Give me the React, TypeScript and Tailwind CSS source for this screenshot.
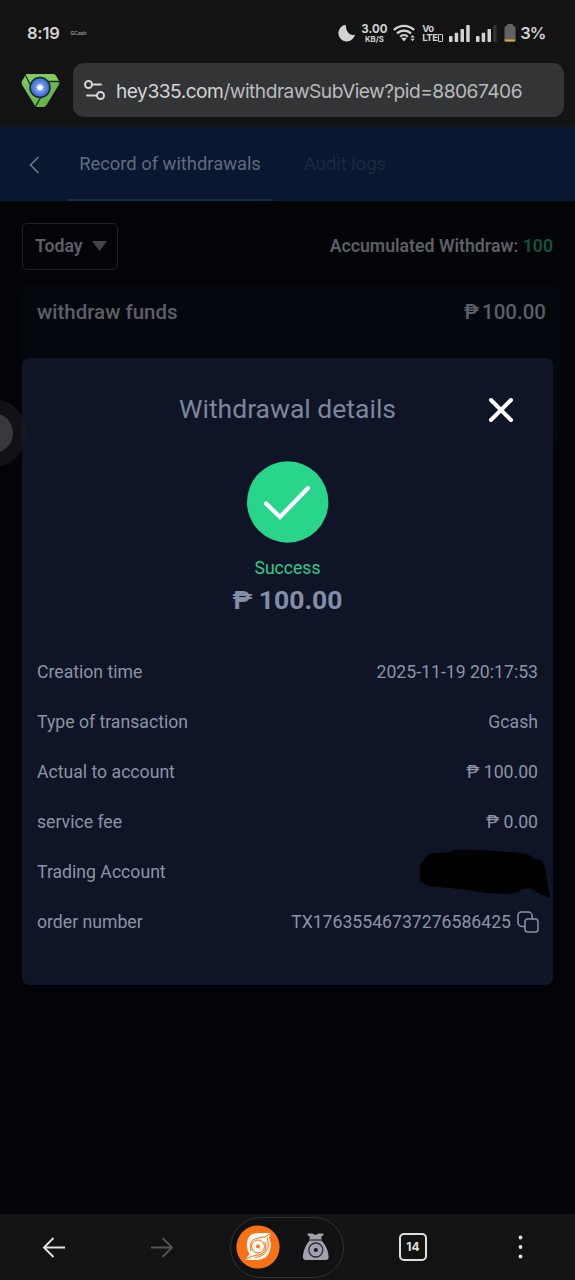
import type { ReactNode } from "react";

function StatusBar() {
  return (
    <div className="flex h-[66px] items-center justify-between pl-[27px] pr-[31px] text-[#d2d2d2]">
      <div className="flex items-center gap-[11px]">
        <span className="font-[Inter] text-[16.5px] leading-5 font-semibold tracking-[-0.2px]">8:19</span>
        <span className="font-[Inter] text-[5px] leading-5 font-medium text-[#a8a8a8]">GCash</span>
      </div>
      <div className="flex items-center">
        <svg className="mr-[6px] h-[18px] w-[17px]" viewBox="0 0 17 18" fill="currentColor">
          <path d="M8 .7A8.400 8.400 0 1 0 17 10.500Q13.500 12 10.500 9 7.300 5.500 8 .7Z" />
        </svg>
        <div className="mr-[6px] flex w-[26px] flex-col items-center font-[Inter] font-bold">
          <span className="text-[11.500px] leading-[11px]">3.00</span>
          <span className="text-[7.800px] leading-[8px]">KB/S</span>
        </div>
        <svg className="mr-[7px] h-[18px] w-[22px]" viewBox="0 0 22 18" fill="none" stroke="currentColor" strokeWidth="2.200">
          <path d="M.8 6a14.500 14.500 0 0 1 20.400 0" />
          <path d="M4 9.500a10 10 0 0 1 14 0" />
          <path d="M7.200 12.700a5.500 5.500 0 0 1 7.600 0" />
          <path d="M8 13.800h6L11 17.500z" fill="currentColor" stroke="none" />
          <path d="M17.500 13.500 19.600 11l2.100 2.500zM17.500 14.800l2.100 2.500 2.100-2.500z" fill="currentColor" stroke="none" />
        </svg>
        <div className="mr-[6px] flex w-[21px] flex-col font-[Inter] text-[9.500px] font-bold tracking-[-0.500px]">
          <span className="leading-[9.500px]">Vo</span>
          <span className="flex items-center leading-[9.500px]">
            LTE
            <span className="ml-[0.500px] h-[8px] w-[5px] shrink-0 rounded-[1px] border-[1.500px] border-current" />
          </span>
        </div>
        <svg className="mr-[6px] h-[17px] w-[21px]" viewBox="0 0 21 17" fill="currentColor">
          <rect x="0" y="11" width="3.500" height="6" rx=".8" />
          <rect x="5.700" y="7.800" width="3.500" height="9.200" rx=".8" />
          <rect x="11.500" y="4" width="3.500" height="13" rx=".8" />
          <rect x="17.200" y="0" width="3.500" height="17" rx=".8" />
        </svg>
        <svg className="mr-[7px] h-[17px] w-[21px]" viewBox="0 0 21 17" fill="currentColor">
          <rect x="0" y="11" width="3.500" height="6" rx=".8" />
          <rect x="5.700" y="7.800" width="3.500" height="9.200" rx=".8" />
          <rect x="11.500" y="4" width="3.500" height="13" rx=".8" />
          <rect x="17.200" y="0" width="3.500" height="17" rx=".8" fill="#343434" />
        </svg>
        <svg className="mr-[4px] h-[18px] w-[12px]" viewBox="0 0 12 18">
          <path d="M3 2V1q0-1 1-1h4q1 0 1 1v1h1q1.500 0 1.500 1.500V16q0 1.500-1.500 1.500H2Q.5 17.500.5 16V3.500Q.5 2 2 2Z" fill="#626262" />
          <path d="M.5 15.500h11V16q0 1.500-1.500 1.500H2Q.5 17.500.5 16Z" fill="#dda33e" />
        </svg>
        <span className="-mr-px font-[Inter] text-[16.500px] leading-5 font-semibold tracking-[-1.200px]">3%</span>
      </div>
    </div>
  );
}

function AddressBar() {
  return (
    <div className="-mt-[3px] flex h-[54px] items-center pl-[21px] pr-[11px]">
      <svg className="h-[35px] w-[39px] shrink-0" viewBox="0 0 39 35">
        <defs>
          <linearGradient id="leaf" x1="0" y1="0" x2="1" y2="1">
            <stop offset="0" stopColor="#85c865" />
            <stop offset="1" stopColor="#5cae43" />
          </linearGradient>
          <radialGradient id="core">
            <stop offset="0" stopColor="#a8c5ff" />
            <stop offset=".6" stopColor="#5b83e0" />
            <stop offset="1" stopColor="#3b65cb" />
          </radialGradient>
        </defs>
        <path d="M6 1h26q2 0 3 2l3 5q.8 2-.3 4L25.500 32q-1 2-3 2h-6q-2 0-3-2L1.200 12q-1-2-.2-4l3-5Q5 1 6 1Z" fill="url(#leaf)" />
        <path d="M6 1h26q2 0 3 2l3 5H19Q10 8 8.500 13L4.500 3Z" fill="#82c960" />
        <path d="M4.500 2.500 10 13M38 8.500H20M14.500 33.500 20 24" stroke="#182b18" strokeWidth="1.300" fill="none" />
        <circle cx="19" cy="14.500" r="10" fill="url(#core)" stroke="#17253c" strokeWidth="1.500" />
        <path d="m19 10.500.9 1.900 2-.8-.8 2 1.900.9-1.900.9.8 2-2-.8-.9 1.900-.9-1.900-2 .8.8-2-1.900-.9 1.900-.9-.8-2 2 .8Z" fill="#f6faff" />
      </svg>
      <div className="ml-[13px] flex h-[54px] w-[491px] items-center rounded-[11px] bg-[#333436] pl-[11px]">
        <svg className="h-[21px] w-[22px] shrink-0" viewBox="0 0 22 21" fill="none" stroke="#d5d6d8" strokeWidth="2" strokeLinecap="round">
          <circle cx="4.500" cy="4.500" r="3.500" />
          <path d="M8.300 4.500H17" />
          <circle cx="16.500" cy="15.500" r="3.500" />
          <path d="M3 15.500h10" />
        </svg>
        <span className="ml-[10px] pt-[2px] whitespace-nowrap font-[Inter] text-[19.200px] leading-7 tracking-[-0.520px] text-[#d4d5d7]">
          hey335.com<span className="text-[#b9babc]">/withdrawSubView?pid=88067406</span>
        </span>
      </div>
    </div>
  );
}

function TabHeader() {
  return (
    <nav className="flex h-[74px] items-stretch bg-[#0a1731] text-[18.350px] leading-6">
      <button className="flex w-[67px] items-center pt-[2px] pl-[28px]" aria-label="Back">
        <svg className="h-[18px] w-[12px]" viewBox="0 0 12 18" fill="none" stroke="#747c89" strokeWidth="1.500">
          <path d="M10.500 1 2.500 9l8 8" />
        </svg>
      </button>
      <div className="flex w-[206px] items-center justify-center border-b-2 border-[#0c3345] pt-[2px] text-[#616b7c]">Record of withdrawals</div>
      <div className="ml-[31px] flex items-center border-b-2 border-transparent pt-[2px] text-[#1d2a40]">Audit logs</div>
    </nav>
  );
}

function DetailRow({ label, children }: { label: string; children?: ReactNode }) {
  return (
    <div className="flex h-[50px] items-center justify-between">
      <span>{label}</span>
      <span className="flex items-center">{children}</span>
    </div>
  );
}

function WithdrawalDialog() {
  return (
    <section className="absolute top-[358px] left-[22px] flex h-[627px] w-[531px] flex-col rounded-[7px] bg-[#0f1526] px-[15px] text-[#8c93a6]">
      <header className="flex h-[102px] items-center">
        <span className="w-[64px]" />
        <h1 className="flex-1 text-center text-[26.500px] leading-8 text-[#7d869f]">Withdrawal details</h1>
        <button className="flex w-[64px] justify-start pt-[2px]" aria-label="Close">
          <svg className="ml-[14px] h-[26px] w-[26px]" viewBox="0 0 26 26" stroke="#fff" strokeWidth="4" strokeLinecap="round">
            <path d="m3 3 20 20M23 3 3 23" />
          </svg>
        </button>
      </header>
      <div className="flex flex-col items-center">
        <svg className="mt-[0.500px] h-[82px] w-[82px]" viewBox="0 0 82 82">
          <circle cx="40.700" cy="41" r="40.700" fill="#29d48b" />
          <path d="m19 42.500 14 13.500 28-29" fill="none" stroke="#fff" strokeWidth="4.300" strokeLinecap="round" />
        </svg>
        <span className="mt-[13px] text-[17.600px] leading-6 text-[#2dcb8c]">Success</span>
        <strong className="mt-[2px] text-[26.500px] leading-9 font-bold text-[#858ea8]">₱ 100.00</strong>
      </div>
      <div className="mt-[29.500px] text-[17.650px] leading-6">
        <DetailRow label="Creation time">2025-11-19 20:17:53</DetailRow>
        <DetailRow label="Type of transaction">Gcash</DetailRow>
        <DetailRow label="Actual to account">₱ 100.00</DetailRow>
        <DetailRow label="service fee">₱ 0.00</DetailRow>
        <DetailRow label="Trading Account">
          <svg className="-mr-[14px] h-[50px] w-[134px]" viewBox="0 0 134 50">
            <path d="M10 9q4-3 11-2l10-1 6-2q35-1 72 4l8 5 6 1 3 7 2 12 3 16-9-3-10-6-8 1-6 4-8 1-22-1-18-3-18-2-21-2-8-4V18Z" fill="#000" stroke="#000" strokeWidth="2" strokeLinejoin="round" />
          </svg>
        </DetailRow>
        <DetailRow label="order number">
          TX17635546737276586425
          <svg className="-mr-[1px] ml-[6px] h-[22px] w-[22px]" viewBox="0 0 22 22" fill="none" stroke="#8c93a6" strokeWidth="1.500">
            <path d="M8 15.500H5.500Q1 15 1 11.500V4.300A3.300 3.300 0 0 1 4.300 1h6.900a4 4 0 0 1 4 4V8" />
            <rect x="8" y="8" width="13" height="13" rx="2.800" />
          </svg>
        </DetailRow>
      </div>
    </section>
  );
}

function WithdrawalRecords() {
  return (
    <main className="flex-1 bg-[#030408] px-[22px] pt-[22px] text-[#5d5f66]">
      <div className="flex h-[47px] items-center justify-between text-[17.700px] leading-6 font-semibold">
        <button className="flex h-[47px] w-[96px] items-center justify-between rounded-[5px] border border-[#202126] pr-[10px] pb-[2px] pl-[12px]">
          Today
          <svg className="h-[10px] w-[15px]" viewBox="0 0 15 10" fill="#43444a">
            <path d="M0 0h15L7.500 10z" />
          </svg>
        </button>
        <span className="pb-[2px]">
          Accumulated Withdraw: <span className="text-[#125238]">100</span>
        </span>
      </div>
      <div className="-mr-[7px] mt-[17px] flex h-[153px] items-start justify-between rounded-[5px] bg-[#05070e] pt-[13px] pr-[14px] pl-[15px] text-[20.500px] leading-6 font-medium">
        <span>withdraw funds</span>
        <span className="flex gap-[3px]"><span>₱</span><span>100.00</span></span>
      </div>
    </main>
  );
}

function BrowserToolbar() {
  return (
    <footer className="flex h-[66px] items-center bg-[#131313]">
      <svg className="ml-[42px] h-[22px] w-[24px]" viewBox="0 0 24 22" fill="none" stroke="#e1e1e1" strokeWidth="2">
        <path d="M23 11.500H2.500M11.500 2 2 11.500l9.500 9.500" />
      </svg>
      <svg className="ml-[84px] h-[22px] w-[24px]" viewBox="0 0 24 22" fill="none" stroke="#555" strokeWidth="1.800">
        <path d="M1 11.500h20.500M12.500 2 22 11.500l-9.500 9.500" />
      </svg>
      <div className="ml-[56px] flex h-[61px] w-[114px] items-center rounded-full border border-[#303234] bg-[#101112] pl-[5px]">
        <svg className="h-[44px] w-[44px]" viewBox="0 0 44 44">
          <circle cx="22" cy="22" r="21.600" fill="#fa7016" />
          <path d="M35 8H22Q14 8 11.500 15q-2 8 2 14L9 35h13q10-1 12-10 2-7-1-12Z" fill="#fffaf3" />
          <g fill="none" stroke="#fa7016" strokeWidth="1">
            <circle cx="22" cy="21.500" r="6.500" />
            <path d="M35 8.500Q29 13 22 13c-7 1-9 7-7 13M9 34.500q7-4 13-4.500c8-1 9-8 7-13M31 12.500q3 9-1 14-3 5-11 6" />
          </g>
          <circle cx="22" cy="21.500" r="2" fill="#fa7016" />
        </svg>
        <svg className="ml-[22px] h-[30px] w-[28px]" viewBox="0 0 28 30">
          <path d="M7 7.500 8 5 5.500 3V1.500h5l3 1.500 3-1.500h5V3L19 5l1 2.500Z" fill="#a0a3ae" />
          <path d="M7.500 8.500h12q6 6.500 7 14.500 1 5-3 5H4q-4 0-3-5 1-8 6.500-14.500Z" fill="#a0a3ae" />
          <circle cx="13.800" cy="18" r="7" fill="none" stroke="#2a2d35" strokeWidth="1.300" />
          <circle cx="13.800" cy="18" r="2.100" fill="#15171b" />
        </svg>
      </div>
      <div className="ml-[55px] flex h-[28px] w-[28px] items-center justify-center rounded-[5px] border-2 border-[#e0e0e0] font-[Inter] text-[12px] font-bold text-[#e0e0e0]">14</div>
      <svg className="ml-[91px] h-[24px] w-[5px]" viewBox="0 0 5 24" fill="#e0e0e0">
        <circle cx="2.500" cy="2.500" r="1.900" />
        <circle cx="2.500" cy="12" r="1.900" />
        <circle cx="2.500" cy="21.500" r="1.900" />
      </svg>
    </footer>
  );
}

export default function App() {
  return (
    <div className="relative flex h-[1280px] w-[575px] flex-col overflow-hidden bg-[#030408] font-[Roboto,sans-serif]">
      <header className="h-[127px] bg-[#131313]">
        <StatusBar />
        <AddressBar />
      </header>
      <TabHeader />
      <WithdrawalRecords />
      <BrowserToolbar />
      <WithdrawalDialog />
      <div className="absolute top-[399px] -left-[41px] flex h-[68px] w-[68px] items-center justify-center rounded-full bg-[#1a1b1f]/60">
        <div className="h-[40px] w-[40px] rounded-full bg-[#38393b]" />
      </div>
    </div>
  );
}
